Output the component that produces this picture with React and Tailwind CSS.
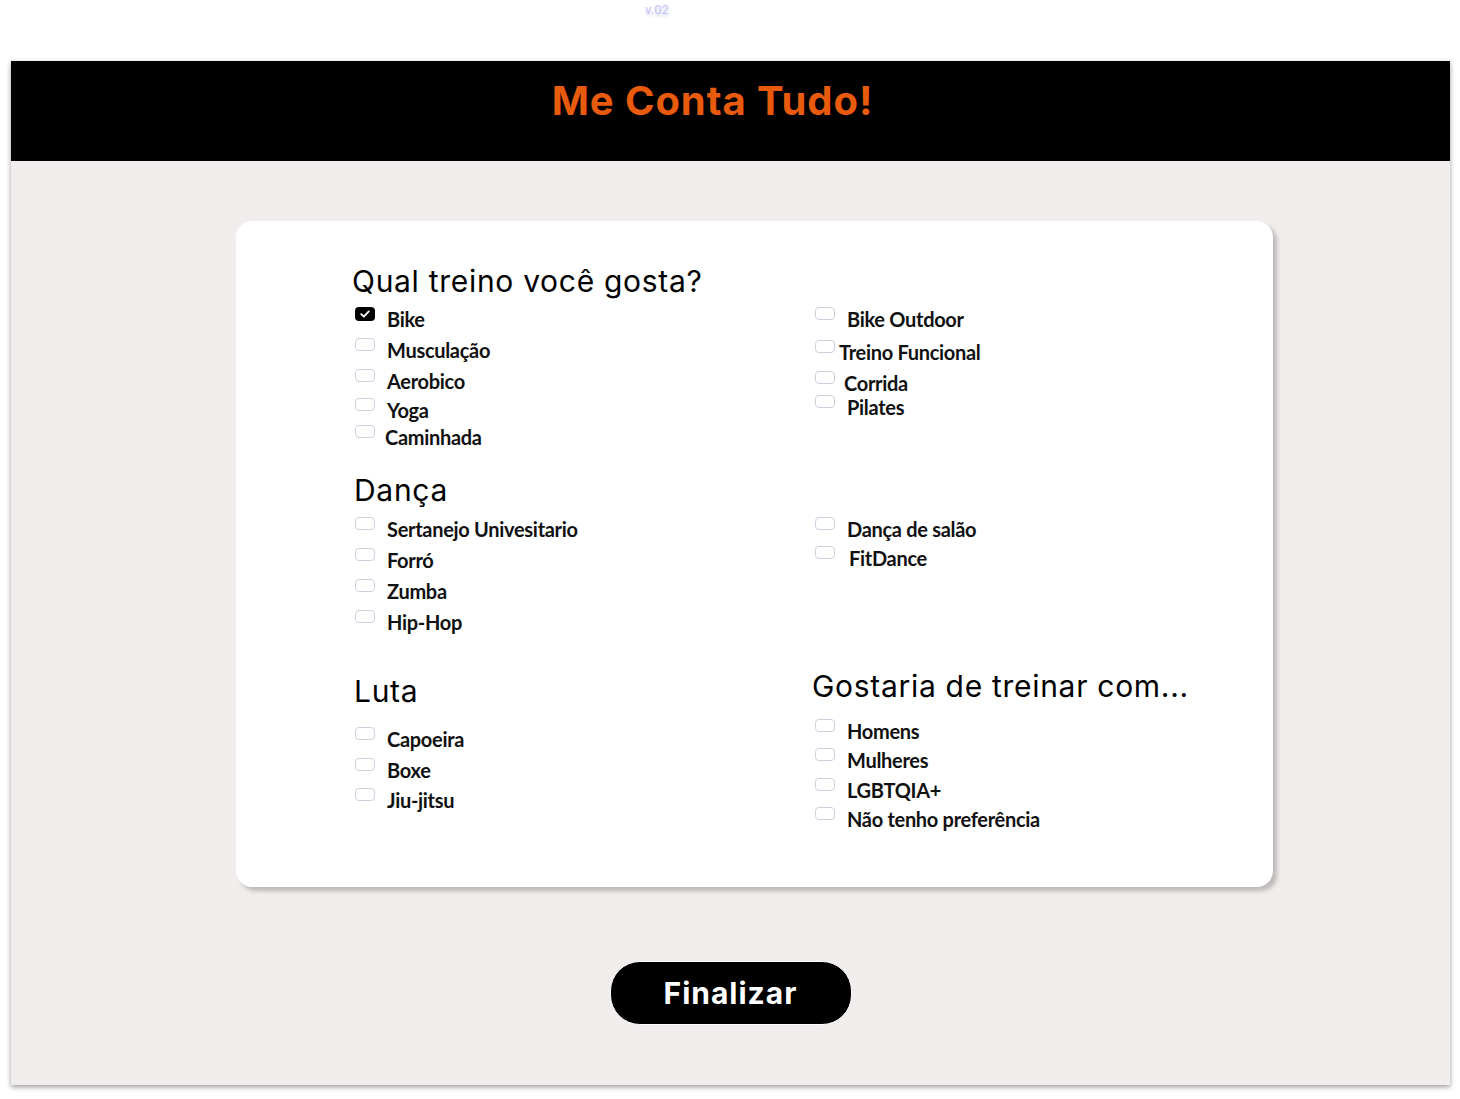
import React from "react";

const heading = "font-['Inter','Noto_Sans',sans-serif] text-[30px] leading-[36px] font-normal text-black tracking-[0.7px]";
const label = "font-['Lato','Noto_Sans',sans-serif] text-[20px] leading-[24px] font-bold text-[#111] tracking-[-0.3px]";

const Checkbox = ({ checked }) =>
  checked ? (
    <span className="ml-[3px] flex h-[14px] w-[20px] shrink-0 items-center justify-center rounded-[4px] bg-black">
      <svg width="10" height="8" viewBox="0 0 10 8" fill="none">
        <path d="M1.2 4.2 3.8 6.6 8.8 1.4" stroke="white" strokeWidth="1.8" strokeLinecap="round" strokeLinejoin="round" />
      </svg>
    </span>
  ) : (
    <span className="ml-[3px] h-[13px] w-[20px] shrink-0 rounded-[4px] border border-[#d2cede] bg-white" />
  );

const Option = ({ text, checked, mt, gap }) => (
  <label className={`flex items-start ${mt}`}>
    <Checkbox checked={checked} />
    <span className={`${label} ${gap}`}>{text}</span>
  </label>
);

const treinoLeft = [
  { text: "Bike", checked: true, mt: "mt-0", gap: "ml-[12px]" },
  { text: "Musculação", mt: "mt-[7px]", gap: "ml-[12px]" },
  { text: "Aerobico", mt: "mt-[7px]", gap: "ml-[12px]" },
  { text: "Yoga", mt: "mt-[5px]", gap: "ml-[12px]" },
  { text: "Caminhada", mt: "mt-[3px]", gap: "ml-[10px]" },
];

const treinoRight = [
  { text: "Bike Outdoor", mt: "mt-0", gap: "ml-[12px]" },
  { text: "Treino Funcional", mt: "mt-[9px]", gap: "ml-[4px]" },
  { text: "Corrida", mt: "mt-[7px]", gap: "ml-[9px]" },
  { text: "Pilates", mt: "mt-0", gap: "ml-[12px]" },
];

const dancaLeft = [
  { text: "Sertanejo Univesitario", mt: "mt-0", gap: "ml-[12px]" },
  { text: "Forró", mt: "mt-[7px]", gap: "ml-[12px]" },
  { text: "Zumba", mt: "mt-[7px]", gap: "ml-[12px]" },
  { text: "Hip-Hop", mt: "mt-[7px]", gap: "ml-[12px]" },
];

const dancaRight = [
  { text: "Dança de salão", mt: "mt-0", gap: "ml-[12px]" },
  { text: "FitDance", mt: "mt-[5px]", gap: "ml-[14px]" },
];

const luta = [
  { text: "Capoeira", mt: "mt-[18px]", gap: "ml-[12px]" },
  { text: "Boxe", mt: "mt-[7px]", gap: "ml-[12px]" },
  { text: "Jiu-jitsu", mt: "mt-[6px]", gap: "ml-[12px]" },
];

const companhia = [
  { text: "Homens", mt: "mt-[15px]", gap: "ml-[12px]" },
  { text: "Mulheres", mt: "mt-[5px]", gap: "ml-[12px]" },
  { text: "LGBTQIA+", mt: "mt-[6px]", gap: "ml-[12px]" },
  { text: "Não tenho preferência", mt: "mt-[5px]", gap: "ml-[12px]" },
];

const OptionList = ({ items }) => (
  <div className="flex flex-col">
    {items.map((item) => (
      <Option key={item.text} {...item} />
    ))}
  </div>
);

export default function App() {
  return (
    <div className="min-h-[1099px] bg-white pb-[14px]">
      <div className="flex h-[61px] justify-center pt-[2px] pr-[146px]">
        <span className="font-['Roboto',sans-serif] text-[13px] leading-[16px] text-[#c5c3ff] [text-shadow:0_2px_3px_rgba(120,120,160,0.35)]">
          v.02
        </span>
      </div>

      <div className="ml-[11px] mr-[10px] shadow-[0_2px_5px_rgba(0,0,0,0.4)]">
        <header className="flex h-[100px] justify-center bg-black pt-[16px] pr-[36px]">
          <h1 className="font-['Inter','Noto_Sans',sans-serif] text-[40px] leading-[48px] font-bold tracking-[0.9px] text-[#e85a0c]">
            Me Conta Tudo!
          </h1>
        </header>

        <main className="flex flex-col bg-[#f2eded] pt-[60px] pb-[60px]">
          <section className="ml-[225px] w-[1037px] rounded-[16px] bg-white pt-[42px] pl-[116px] pb-[56px] shadow-[4px_4px_4px_rgba(0,0,0,0.22)]">
            <h2 className={heading}>Qual treino você gosta?</h2>
            <div className="mt-[8px] grid grid-cols-[460px_1fr]">
              <OptionList items={treinoLeft} />
              <OptionList items={treinoRight} />
            </div>

            <h2 className={`${heading} mt-[23px] ml-[2px]`}>Dança</h2>
            <div className="mt-[9px] grid grid-cols-[460px_1fr]">
              <OptionList items={dancaLeft} />
              <OptionList items={dancaRight} />
            </div>

            <div className="mt-[34px] grid grid-cols-[460px_1fr]">
              <div className="mt-[5px] ml-[2px]">
                <h2 className={heading}>Luta</h2>
                <div className="-ml-[2px]">
                  <OptionList items={luta} />
                </div>
              </div>
              <div>
                <h2 className={heading}>Gostaria de treinar com...</h2>
                <OptionList items={companhia} />
              </div>
            </div>
          </section>

          <div className="mt-[74px] flex justify-center">
            <button className="flex h-[64px] w-[242px] items-center justify-center rounded-[30px] border border-white bg-black font-['Inter','Noto_Sans',sans-serif] text-[30px] font-bold leading-[36px] tracking-[1px] text-white">
              Finalizar
            </button>
          </div>
        </main>
      </div>
    </div>
  );
}
